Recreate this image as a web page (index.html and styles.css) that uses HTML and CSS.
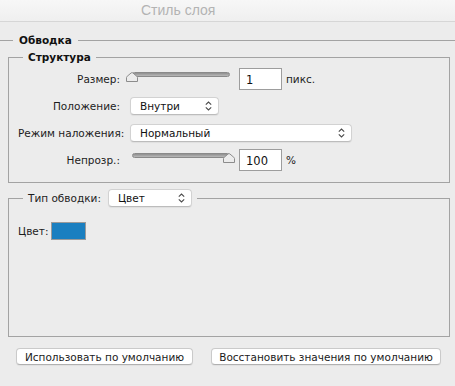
FILE: index.html
```html
<!DOCTYPE html>
<html lang="ru">
<head>
  <meta charset="UTF-8" />
  <title>Стиль слоя</title>
  <link rel="stylesheet" href="styles.css">
</head>
<body>

  <div class="titlebar">Стиль слоя</div>

  <div class="group-title">Обводка</div>

  <!-- Структура -->
  <fieldset class="box box-structure">
    <legend>Структура</legend>
    <div class="rows">
      <div class="lbl">Размер:</div>
      <div class="ctl">
        <div class="slider">
          <div class="track"></div>
          <svg class="thumb" style="left: 0px;" width="12" height="10" viewBox="0 0 12 10"><path d="M0.5 9.5 L0.5 5.5 Q0.5 4.8 1.2 4.3 L5.2 0.9 Q6 0.3 6.8 0.9 L10.8 4.3 Q11.5 4.8 11.5 5.5 L11.5 9.5 Z" fill="#ececec" stroke="#8c8c8c"/></svg>
        </div>
        <input class="num" type="text" value="1">
        <span class="unit">пикс.</span>
      </div>

      <div class="lbl">Положение:</div>
      <div class="ctl">
        <div class="select sel-pos">
          <span>Внутри</span>
          <svg width="7" height="10" viewBox="0 0 7 10"><path d="M0.8 3.6 L3.5 1 L6.2 3.6 M0.8 6.4 L3.5 9 L6.2 6.4" fill="none" stroke="#4a4a4a" stroke-width="1.1"/></svg>
        </div>
      </div>

      <div class="lbl">Режим наложения:</div>
      <div class="ctl">
        <div class="select sel-mode">
          <span>Нормальный</span>
          <svg width="7" height="10" viewBox="0 0 7 10"><path d="M0.8 3.6 L3.5 1 L6.2 3.6 M0.8 6.4 L3.5 9 L6.2 6.4" fill="none" stroke="#4a4a4a" stroke-width="1.1"/></svg>
        </div>
      </div>

      <div class="lbl">Непрозр.:</div>
      <div class="ctl">
        <div class="slider">
          <div class="track"></div>
          <svg class="thumb" style="left: 97px;" width="12" height="10" viewBox="0 0 12 10"><path d="M0.5 9.5 L0.5 5.5 Q0.5 4.8 1.2 4.3 L5.2 0.9 Q6 0.3 6.8 0.9 L10.8 4.3 Q11.5 4.8 11.5 5.5 L11.5 9.5 Z" fill="#ececec" stroke="#8c8c8c"/></svg>
        </div>
        <input class="num" type="text" value="100">
        <span class="unit">%</span>
      </div>
    </div>
  </fieldset>

  <!-- Тип обводки -->
  <fieldset class="box box-stroke">
    <legend>
      <span>Тип обводки:</span>
      <div class="select sel-type">
        <span>Цвет</span>
        <svg width="7" height="10" viewBox="0 0 7 10"><path d="M0.8 3.6 L3.5 1 L6.2 3.6 M0.8 6.4 L3.5 9 L6.2 6.4" fill="none" stroke="#4a4a4a" stroke-width="1.1"/></svg>
      </div>
    </legend>
    <div class="color-row">
      <span>Цвет:</span>
      <div class="swatch"></div>
    </div>
  </fieldset>

  <div class="btn-row">
    <button class="btn btn-default">Использовать по умолчанию</button>
    <button class="btn btn-reset">Восстановить значения по умолчанию</button>
  </div>

</body>
</html>
```

FILE: styles.css
```css
/* Base */
* {
  box-sizing: border-box;
}
body {
  margin: 0;
  width: 455px;
  height: 386px;
  overflow: hidden;
  background: #ececec;
  font-family: 'DejaVu Sans', Verdana, sans-serif;
  font-size: 10.5px;
  color: #1c1c1c;
}

/* Title bar */
.titlebar {
  height: 22px;
  line-height: 21px;
  font-family: 'Liberation Sans', Arial, sans-serif;
  font-size: 14px;
  color: #b3b3b3;
  background: linear-gradient(#f7f7f7, #efefef);
  border-bottom: 1px solid #d6d6d6;
  padding-left: 141px;
}

/* Section heading with lines */
.group-title {
  display: flex;
  align-items: center;
  gap: 6px;
  margin-top: 11px;
  height: 14px;
  font-weight: 700;
  color: #111;
}
.group-title::before {
  content: "";
  width: 13px;
  border-top: 1px solid #a3a3a3;
}
.group-title::after {
  content: "";
  flex: 1;
  border-top: 1px solid #a3a3a3;
}

/* Boxes */
.box {
  margin: 0 5px 0 8px;
  border: 1px solid #a3a3a3;
  min-width: 0;
}
.box legend {
  margin-left: 5px;
  padding: 0 5px;
}
.box-structure {
  margin-top: 3px;
  padding: 4px 8px 11px 9px;
}
.box-structure legend {
  font-weight: 700;
  line-height: 14px;
  color: #111;
}
.box-stroke {
  margin-top: 6px;
  height: 148px;
  padding: 15px 8px 8px 9px;
}
.box-stroke legend {
  display: flex;
  align-items: center;
  gap: 7px;
}

/* Rows in Структура */
.rows {
  display: grid;
  grid-template-columns: 102px auto;
  column-gap: 10px;
  row-gap: 5px;
}
.lbl {
  text-align: right;
  line-height: 22px;
  white-space: nowrap;
}
.ctl {
  display: flex;
  align-items: center;
  height: 22px;
}

/* Slider */
.slider {
  position: relative;
  width: 109px;
  height: 22px;
  margin-left: -4px;
}
.track {
  position: absolute;
  left: 6px;
  right: 5px;
  top: 4px;
  height: 5px;
  border-radius: 3px;
  background: linear-gradient(#8f8f8f, #b9b9b9);
  border: 1px solid #8a8a8a;
}
.thumb {
  position: absolute;
  top: 4px;
}

/* Number input */
.num {
  width: 43px;
  height: 22px;
  margin: 0 0 0 4px;
  padding: 2px 6px 0;
  border: 1px solid #9d9d9d;
  background: #fff;
  font-family: 'DejaVu Sans', Verdana, sans-serif;
  font-size: 11.5px;
  color: #111;
}
.unit {
  margin-left: 4px;
}

/* Popup select */
.select {
  display: flex;
  align-items: center;
  justify-content: space-between;
  height: 18px;
  padding: 0 6px 0 9px;
  background: #fff;
  border: 1px solid #d2d2d2;
  border-bottom-color: #bcbcbc;
  border-radius: 4px;
  box-shadow: 0 1px 1px rgba(0,0,0,0.06);
  color: #111;
}
.sel-pos {
  width: 89px;
}
.sel-mode {
  width: 222px;
}
.sel-type {
  width: 84px;
  font-weight: 400;
}

/* Colour */
.color-row {
  display: flex;
  align-items: center;
  gap: 3px;
}
.swatch {
  width: 35px;
  height: 18px;
  background: #1a7fc0;
  border: 1px solid #9a9a9a;
}

/* Buttons */
.btn-row {
  display: flex;
  gap: 18px;
  margin-top: 11px;
  padding-left: 16px;
}
.btn {
  height: 17px;
  padding: 0;
  background: #fff;
  border: 1px solid #cacaca;
  border-bottom-color: #b0b0b0;
  border-radius: 4px;
  box-shadow: 0 1px 1px rgba(0,0,0,0.05);
  font-family: 'DejaVu Sans', Verdana, sans-serif;
  font-size: 10.5px;
  color: #1a1a1a;
}
.btn-default {
  width: 177px;
}
.btn-reset {
  width: 230px;
}
```
